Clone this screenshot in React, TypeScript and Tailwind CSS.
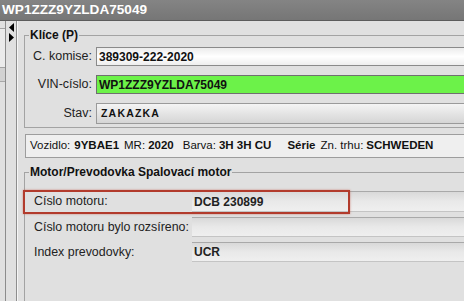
// detail window for a vehicle order: keys, vehicle line and engine data

import React from "react";

const LeftStrip = () => {
  return (
    <div className="flex w-[24px] shrink-0">
      <div className="flex w-[6px] flex-col border-r border-[#8c8c8c]">
        <div className="h-[7px]" />
        <div className="h-[40px] border-y border-[#a3a3a3] bg-[#ebebeb]" />
        <div className="h-[14px] border-b border-[#a8a8a8] bg-[#d2d2d2]" />
      </div>
      <div className="flex w-[10px] flex-col items-center pt-[2px]">
        <svg width="5" height="19" viewBox="0 0 5 19">
          <polygon points="5,0 0,4.5 5,9" fill="#000" />
          <polygon points="0,10 5,14.5 0,19" fill="#000" />
        </svg>
      </div>
      <div className="w-[2px] border-l border-[#8e8e8e] bg-[#f6f6f6]" />
    </div>
  );
};

const KeyRow = ({
  label,
  value,
  fieldClass,
  height,
  valueClass,
}: {
  label: string;
  value: string;
  fieldClass: string;
  height: string;
  valueClass?: string;
}) => {
  return (
    <div className={`flex items-stretch ${height}`}>
      <div className="flex w-[67px] shrink-0 items-center justify-end whitespace-nowrap text-[12.5px] text-[#222]">
        {label}
      </div>
      <div
        className={`ml-[4px] flex flex-1 items-center border pl-[2px] font-bold text-[#111] ${fieldClass}`}
      >
        <span className={valueClass ?? "text-[12px]"}>{value}</span>
      </div>
    </div>
  );
};

const MotorRow = ({
  label,
  value,
  height,
  marked,
}: {
  label: string;
  value: string;
  height: string;
  marked?: boolean;
}) => {
  return (
    <div className={`relative flex ${height}`}>
      <div className="flex w-[167px] shrink-0 items-center whitespace-nowrap pl-[9px] text-[12.4px] text-[#222]">
        {label}
      </div>
      <div className="flex flex-1 items-center border-t border-b border-t-[#a9a9a9] border-b-[#c4c4c4] bg-gradient-to-b from-[#d9d9d9] via-[#e9e9e9] to-[#efefef] pl-[2px] text-[12px] font-bold text-[#222]">
        {value}
      </div>
      {/* highlight drawn over the row */}
      {marked && (
        <div className="pointer-events-none absolute left-[-2px] top-[-1px] h-[24px] w-[327px] border-2 border-[#b23b2c] shadow-[0_0_2px_rgba(190,60,40,0.55)]" />
      )}
    </div>
  );
};

const App = () => {
  return (
    <div className="flex h-[301px] w-[464px] flex-col overflow-hidden bg-[#e0e0e0] font-['Liberation_Sans',Arial,sans-serif]">
      <div className="h-[21px] shrink-0 border-b border-[#5c5c5c] bg-gradient-to-b from-[#848484] to-[#767676] pl-[2px] text-[13.6px] font-bold leading-[20px] text-white">
        WP1ZZZ9YZLDA75049
      </div>

      <div className="flex min-h-0 flex-1">
        <LeftStrip />

        <div className="w-[460px] shrink-0 pt-[7px]">
          <fieldset className="border border-[#a3a3a3] pb-[3px]">
            <legend className="ml-[4px] px-[1px] text-[12px] font-bold leading-[14px] text-[#111]">
              Klíce (P)
            </legend>
            <div className="mt-[5px] flex flex-col gap-[9px]">
              <KeyRow
                label="C. komise:"
                value="389309-222-2020"
                height="h-[19px]"
                fieldClass="border-[#8a8a8a] bg-gradient-to-b from-[#ececec] via-white to-[#eeeeee]"
              />
              <KeyRow
                label="VIN-císlo:"
                value="WP1ZZZ9YZLDA75049"
                height="h-[19px]"
                fieldClass="border-[#6f6f6f] bg-[#6cf249]"
              />
              <KeyRow
                label="Stav:"
                value="ZAKAZKA"
                height="h-[21px]"
                fieldClass="border-[#9a9a9a] bg-gradient-to-b from-[#f4f4f4] to-[#d5d5d5] pl-[4px]"
                valueClass="text-[10.5px] tracking-[1.2px]"
              />
            </div>
          </fieldset>

          <div className="ml-[1px] mt-[6px] flex h-[24px] items-center whitespace-nowrap border border-[#9d9d9d] bg-[#efefef] pl-[4px] text-[11.5px] text-[#111]">
            <span>Vozidlo:</span>
            <b className="ml-[4px]">9YBAE1</b>
            <span className="ml-[5px]">MR:</span>
            <b className="ml-[3px]">2020</b>
            <span className="ml-[9px]">Barva:</span>
            <b className="ml-[3px]">3H 3H CU</b>
            <b className="ml-[16px]">Série</b>
            <span className="ml-[5px]">Zn. trhu:</span>
            <b className="ml-[3px]">SCHWEDEN</b>
          </div>

          <fieldset className="mt-[7px] h-[200px] border border-[#a3a3a3]">
            <legend className="ml-[4px] px-[1px] text-[12px] font-bold leading-[14px] text-[#111]">
              Motor/Prevodovka Spalovací motor
            </legend>
            <div className="mt-[12px] flex flex-col gap-[5px]">
              <MotorRow label="Císlo motoru:" value="DCB 230899" height="h-[21px]" marked />
              <MotorRow label="Císlo motoru bylo rozsíreno:" value="" height="h-[20px]" />
              <MotorRow label="Index prevodovky:" value="UCR" height="h-[20px]" />
            </div>
          </fieldset>
        </div>
      </div>
    </div>
  );
};

export default App;
